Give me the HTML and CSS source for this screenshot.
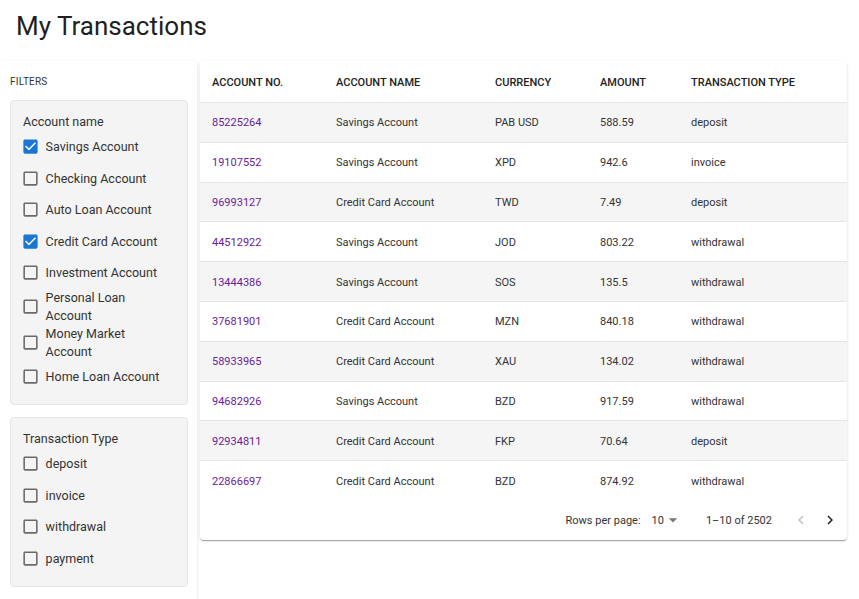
FILE: index.html
```html
<!DOCTYPE html>
<html lang="en">
<head>
<meta charset="utf-8">
<title>My Transactions</title>
<link rel="stylesheet" href="styles.css">
</head>
<body>
<header class="page-header"><h1 class="title">My Transactions</h1></header>
<div class="main">
  <aside class="sidebar">
    <div class="filters-label">Filters</div>
    <div class="filter-box">
      <div class="filter-title">Account name</div>
      <label class="opt"><svg class="cb on" viewBox="0 0 24 24"><path d="M19 3H5c-1.11 0-2 .9-2 2v14c0 1.1.89 2 2 2h14c1.11 0 2-.9 2-2V5c0-1.1-.89-2-2-2zm-9 14l-5-5 1.41-1.41L10 14.170l7.59-7.59L19 8l-9 9z"/></svg><span>Savings Account</span></label>
      <label class="opt"><svg class="cb" viewBox="0 0 24 24"><path d="M19 5v14H5V5h14m0-2H5c-1.1 0-2 .9-2 2v14c0 1.1.9 2 2 2h14c1.1 0 2-.9 2-2V5c0-1.1-.9-2-2-2z"/></svg><span>Checking Account</span></label>
      <label class="opt"><svg class="cb" viewBox="0 0 24 24"><path d="M19 5v14H5V5h14m0-2H5c-1.1 0-2 .9-2 2v14c0 1.1.9 2 2 2h14c1.1 0 2-.9 2-2V5c0-1.1-.9-2-2-2z"/></svg><span>Auto Loan Account</span></label>
      <label class="opt"><svg class="cb on" viewBox="0 0 24 24"><path d="M19 3H5c-1.11 0-2 .9-2 2v14c0 1.1.89 2 2 2h14c1.11 0 2-.9 2-2V5c0-1.1-.89-2-2-2zm-9 14l-5-5 1.41-1.41L10 14.170l7.59-7.59L19 8l-9 9z"/></svg><span>Credit Card Account</span></label>
      <label class="opt"><svg class="cb" viewBox="0 0 24 24"><path d="M19 5v14H5V5h14m0-2H5c-1.1 0-2 .9-2 2v14c0 1.1.9 2 2 2h14c1.1 0 2-.9 2-2V5c0-1.1-.9-2-2-2z"/></svg><span>Investment Account</span></label>
      <label class="opt two"><svg class="cb" viewBox="0 0 24 24"><path d="M19 5v14H5V5h14m0-2H5c-1.1 0-2 .9-2 2v14c0 1.1.9 2 2 2h14c1.1 0 2-.9 2-2V5c0-1.1-.9-2-2-2z"/></svg><span>Personal Loan Account</span></label>
      <label class="opt two"><svg class="cb" viewBox="0 0 24 24"><path d="M19 5v14H5V5h14m0-2H5c-1.1 0-2 .9-2 2v14c0 1.1.9 2 2 2h14c1.1 0 2-.9 2-2V5c0-1.1-.9-2-2-2z"/></svg><span>Money Market Account</span></label>
      <label class="opt"><svg class="cb" viewBox="0 0 24 24"><path d="M19 5v14H5V5h14m0-2H5c-1.1 0-2 .9-2 2v14c0 1.1.9 2 2 2h14c1.1 0 2-.9 2-2V5c0-1.1-.9-2-2-2z"/></svg><span>Home Loan Account</span></label>
    </div>
    <div class="filter-box">
      <div class="filter-title">Transaction Type</div>
      <label class="opt"><svg class="cb" viewBox="0 0 24 24"><path d="M19 5v14H5V5h14m0-2H5c-1.1 0-2 .9-2 2v14c0 1.1.9 2 2 2h14c1.1 0 2-.9 2-2V5c0-1.1-.9-2-2-2z"/></svg><span>deposit</span></label>
      <label class="opt"><svg class="cb" viewBox="0 0 24 24"><path d="M19 5v14H5V5h14m0-2H5c-1.1 0-2 .9-2 2v14c0 1.1.9 2 2 2h14c1.1 0 2-.9 2-2V5c0-1.1-.9-2-2-2z"/></svg><span>invoice</span></label>
      <label class="opt"><svg class="cb" viewBox="0 0 24 24"><path d="M19 5v14H5V5h14m0-2H5c-1.1 0-2 .9-2 2v14c0 1.1.9 2 2 2h14c1.1 0 2-.9 2-2V5c0-1.1-.9-2-2-2z"/></svg><span>withdrawal</span></label>
      <label class="opt"><svg class="cb" viewBox="0 0 24 24"><path d="M19 5v14H5V5h14m0-2H5c-1.1 0-2 .9-2 2v14c0 1.1.9 2 2 2h14c1.1 0 2-.9 2-2V5c0-1.1-.9-2-2-2z"/></svg><span>payment</span></label>
    </div>
  </aside>
  <section class="paper">
    <div class="row head">
      <div class="c c1">Account No.</div><div class="c c2">Account Name</div><div class="c c3">Currency</div><div class="c c4">Amount</div><div class="c c5">Transaction Type</div>
    </div>
    <div class="row"><div class="c c1"><a class="acc">85225264</a></div><div class="c c2">Savings Account</div><div class="c c3">PAB USD</div><div class="c c4">588.59</div><div class="c c5">deposit</div></div>
    <div class="row"><div class="c c1"><a class="acc">19107552</a></div><div class="c c2">Savings Account</div><div class="c c3">XPD</div><div class="c c4">942.6</div><div class="c c5">invoice</div></div>
    <div class="row"><div class="c c1"><a class="acc">96993127</a></div><div class="c c2">Credit Card Account</div><div class="c c3">TWD</div><div class="c c4">7.49</div><div class="c c5">deposit</div></div>
    <div class="row"><div class="c c1"><a class="acc">44512922</a></div><div class="c c2">Savings Account</div><div class="c c3">JOD</div><div class="c c4">803.22</div><div class="c c5">withdrawal</div></div>
    <div class="row"><div class="c c1"><a class="acc">13444386</a></div><div class="c c2">Savings Account</div><div class="c c3">SOS</div><div class="c c4">135.5</div><div class="c c5">withdrawal</div></div>
    <div class="row"><div class="c c1"><a class="acc">37681901</a></div><div class="c c2">Credit Card Account</div><div class="c c3">MZN</div><div class="c c4">840.18</div><div class="c c5">withdrawal</div></div>
    <div class="row"><div class="c c1"><a class="acc">58933965</a></div><div class="c c2">Credit Card Account</div><div class="c c3">XAU</div><div class="c c4">134.02</div><div class="c c5">withdrawal</div></div>
    <div class="row"><div class="c c1"><a class="acc">94682926</a></div><div class="c c2">Savings Account</div><div class="c c3">BZD</div><div class="c c4">917.59</div><div class="c c5">withdrawal</div></div>
    <div class="row"><div class="c c1"><a class="acc">92934811</a></div><div class="c c2">Credit Card Account</div><div class="c c3">FKP</div><div class="c c4">70.64</div><div class="c c5">deposit</div></div>
    <div class="row last"><div class="c c1"><a class="acc">22866697</a></div><div class="c c2">Credit Card Account</div><div class="c c3">BZD</div><div class="c c4">874.92</div><div class="c c5">withdrawal</div></div>
    <div class="pager">
      <span class="rpp">Rows per page:</span>
      <span class="sel">10<svg class="drop" viewBox="0 0 24 24"><path d="M7 10l5 5 5-5z"/></svg></span>
      <span class="range">1–10 of 2502</span>
      <svg class="nav dis" viewBox="0 0 24 24"><path d="M15.41 7.41 14 6l-6 6 6 6 1.41-1.41L10.83 12z"/></svg>
      <svg class="nav" viewBox="0 0 24 24"><path d="M10 6 8.59 7.41 13.17 12l-4.58 4.59L10 18l6-6z"/></svg>
    </div>
  </section>
</div>
</body>
</html>
```
FILE: styles.css
```css
* { box-sizing: border-box; }
html, body { margin: 0; padding: 0; background: #fff; }
body {
  font-family: Roboto, "Liberation Sans", Arial, sans-serif;
  color: rgba(0,0,0,0.87);
  overflow: hidden;
  height: 599px;
}
.page-header { height: 61px; padding: 11px 16px 0; }
.title { margin: 0; font-size: 26px; line-height: 30px; font-weight: 400; color: #1f1f1f; }
.main { display: flex; align-items: flex-start; height: 538px; }
.sidebar {
  width: 197px;
  flex: none;
  height: 560px;
  padding: 11px 9px 0 10px;
  background: #fff;
  box-shadow: 0 2px 1px -1px rgba(0,0,0,.2), 0 1px 1px 0 rgba(0,0,0,.14), 0 1px 3px 0 rgba(0,0,0,.12);
  border-radius: 0 4px 0 0;
}
.filters-label {
  font-size: 10px;
  text-transform: uppercase;
  line-height: 20px;
  color: #333;
  letter-spacing: 0.2px;
  margin-bottom: 8px;
}
.filter-box {
  width: 178px;
  background: #f4f4f4;
  border: 1px solid #e6e6e6;
  border-radius: 4px;
  padding: 12px 8px 12px 12px;
  margin-bottom: 12px;
}
.filter-title { font-size: 12.5px; line-height: 18px; color: #333; }
.opt { display: flex; align-items: center; min-height: 31.5px; font-size: 12.5px; line-height: 17.5px; color: #333; }
.opt.two { min-height: 36px; }
.cb { width: 19px; height: 19px; margin-left: -2.4px; flex: none; fill: #6b6b6b; }
.cb.on { fill: #1976d2; }
.opt span { margin-left: 6px; max-width: 118px; }
.paper {
  margin-left: 3px;
  width: 647px;
  flex: none;
  background: #fff;
  border-radius: 4px;
  box-shadow: 0 2px 1px -1px rgba(0,0,0,.2), 0 1px 1px 0 rgba(0,0,0,.14), 0 1px 3px 0 rgba(0,0,0,.12);
  font-size: 11px;
  color: #333;
}
.row { display: flex; height: 39.8px; align-items: center; border-bottom: 1px solid #e6e6e6; }
.row:nth-child(even) { background: #f5f5f5; }
.row.head { height: 42px; font-weight: 500; text-transform: uppercase; color: #222; background: #fff; }
.row.last { border-bottom: none; }
.c { padding: 1px 0 0 12px; white-space: nowrap; }
.c1 { width: 124px; }
.c2 { width: 159px; }
.c3 { width: 105px; }
.c4 { width: 91px; }
.c5 { flex: 1; }
.acc { color: #6a1b9a; text-decoration: none; }
.pager { display: flex; align-items: center; justify-content: flex-end; height: 39px; padding-right: 8px; font-size: 11px; color: #333; }
.rpp { margin-right: 11px; }
.sel { display: flex; align-items: center; }
.drop { width: 20px; height: 20px; fill: #777; margin-left: -1px; }
.range { margin-left: 23px; margin-right: 20px; }
.nav { width: 18px; height: 18px; fill: #222; margin-left: 11px; }
.nav.dis { fill: #c2c2c2; margin-left: 0; }
```
